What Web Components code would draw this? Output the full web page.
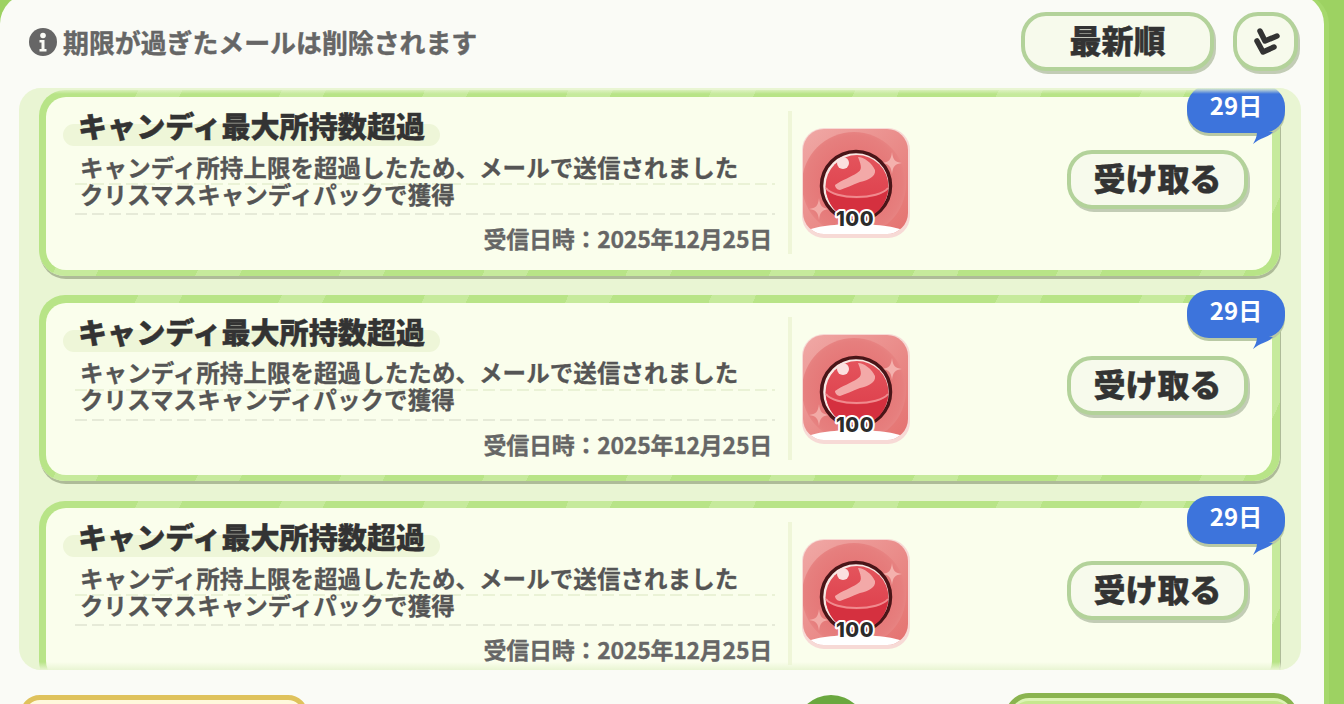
<!DOCTYPE html>
<html lang="ja">
<head>
<meta charset="utf-8">
<style>
html,body{margin:0;padding:0;height:704px;overflow:hidden;background:#9dd262;}
body{font-family:"Noto Sans CJK JP","Noto Sans",sans-serif;}
</style>
</head>
<body>
<x-app></x-app>

<template id="t-app">
<style>
:host{display:block;width:1344px;height:704px;overflow:hidden;background:#9dd262;}
.panel{width:1324px;height:720px;margin-top:-6px;box-sizing:border-box;background:#fafbf6;border-radius:30px 30px 0 0;padding:18px 23px 0 19px;display:flex;flex-direction:column;box-shadow:5px 0 0 #a5d86c;}
.foot{display:flex;align-items:flex-start;flex:none;margin-top:23px;padding-left:1px;}
.yellow{width:288px;height:70px;flex:none;margin-top:2px;box-sizing:border-box;border:5px solid #dfc25c;border-radius:20px;background:#fff9dc;}
.circle{width:72px;height:72px;flex:none;margin:2px 0 0 487px;border-radius:50%;background:#6aa83f;}
.green{width:293px;height:70px;flex:none;margin-left:138px;box-sizing:border-box;border:5px solid #8ab44f;border-radius:24px;background:#c6e88f;box-shadow:inset 0 3px 0 #dcf4b4;}
</style>
<div class="panel">
<x-top-bar></x-top-bar>
<x-mail-list>
<x-mail-card></x-mail-card>
<x-mail-card></x-mail-card>
<x-mail-card></x-mail-card>
</x-mail-list>
<div class="foot"><div class="yellow"></div><div class="circle"></div><div class="green"></div></div>
</div>
</template>

<template id="t-top">
<style>
:host{display:flex;align-items:flex-start;flex:none;height:76px;padding:0 3px 0 10px;}
svg.i{width:28px;height:28px;flex:none;margin:16px 6px 0 0;}
.note{font-size:25.900px;font-weight:700;color:#666;line-height:30px;white-space:nowrap;margin-top:15px;flex:1;-webkit-text-stroke:.4px #666;}
x-btn.sort{width:193px;height:59px;margin-right:19px;flex:none;}
x-btn.dir{width:65px;height:59px;flex:none;}
</style>
<svg class="i" viewBox="0 0 28 28"><circle cx="14" cy="14" r="14" fill="#666"/><circle cx="14" cy="7.5" r="2.8" fill="#fafbf6"/><path d="M10.5 12h5v9h2v2.5h-7V21h2v-6.500h-2z" fill="#fafbf6"/></svg>
<div class="note">期限が過ぎたメールは削除されます</div>
<x-btn class="sort">最新順</x-btn>
<x-btn class="dir"><svg width="40" height="36" viewBox="0 0 40 36" style="display:block;margin-top:5px"><path d="M14 7l5 10 12-5M11 17l6 11 11-5" fill="none" stroke="#333" stroke-width="5.500" stroke-linecap="round" stroke-linejoin="round"/></svg></x-btn>
</template>

<template id="t-btn">
<style>
:host{display:flex;align-items:center;justify-content:center;box-sizing:border-box;height:59px;padding-bottom:5px;border:4.500px solid #b3d29a;border-radius:25px;background:#f7faec;box-shadow:2px 3px 0 #c2ccb5;font-size:32px;font-weight:900;color:#333;line-height:1;white-space:nowrap;-webkit-text-stroke:.4px #333;}
</style>
<slot></slot>
</template>

<template id="t-list">
<style>
:host{display:block;position:relative;height:582px;flex:none;border-radius:22px;background:#e9f5d3;overflow:hidden;}
.scroll{display:flex;flex-direction:column;gap:19.500px;padding:1.500px 21px 0 20px;}
:host::before,:host::after{content:"";position:absolute;left:0;right:0;height:8px;z-index:3;pointer-events:none;}
:host::before{top:0;background:linear-gradient(#e9f5d3,rgba(233,245,211,0));height:6px;}
:host::after{bottom:0;background:linear-gradient(rgba(233,245,211,0),#e9f5d3);}
</style>
<div class="scroll"><slot></slot></div>
</template>

<template id="t-card">
<style>
:host{display:block;position:relative;flex:none;box-sizing:border-box;height:186px;padding:7.500px 8px 6px 7px;border-radius:26px;background:repeating-linear-gradient(115deg,#b8e487 0 90px,#c6ea9c 90px 130px);box-shadow:1px 3px 0 #aebb98;}
.inner{display:flex;height:172.500px;box-sizing:border-box;border-radius:20px;background:#fafeec;}
.left{width:742px;flex:none;box-sizing:border-box;padding-top:12px;padding-left:29px;padding-right:13px;}
.title{display:inline-block;position:relative;margin-left:3px;font-size:29.100px;font-weight:900;line-height:32px;color:#333;white-space:nowrap;z-index:0;-webkit-text-stroke:.4px #333;}
.title::before{content:"";position:absolute;left:-15px;right:-15px;top:15px;height:22px;border-radius:11px;background:#eef6d8;z-index:-1;}
.desc{margin-top:10.500px;padding-left:5px;height:62px;font-size:23.500px;letter-spacing:.07px;font-weight:700;line-height:27px;color:#555;white-space:nowrap;-webkit-text-stroke:.3px #555;
background:repeating-linear-gradient(90deg,#eaf2d6 0 12px,transparent 12px 17px) 0 29.500px/100% 2px no-repeat,repeating-linear-gradient(90deg,#e6ead8 0 12px,transparent 12px 17px) 0 59.500px/100% 2px no-repeat;}
.date{margin-top:7.500px;line-height:30px;font-size:23px;letter-spacing:-.25px;font-weight:700;color:#666;text-align:right;padding-right:3px;white-space:nowrap;-webkit-text-stroke:.3px #666;}
.div{width:4px;height:143px;margin-top:14px;background:#eff6d8;flex:none;}
x-candy{margin:31px 0 0 10px;flex:none;}
x-btn{width:181px;height:59px;margin:53px 24px 0 auto;flex:none;}
x-badge{position:absolute;top:-5px;right:-5px;z-index:2;}
</style>
<div class="inner">
<div class="left">
<div class="title">キャンディ最大所持数超過</div>
<div class="desc">キャンディ所持上限を超過したため、メールで送信されました<br>クリスマスキャンディパックで獲得</div>
<div class="date">受信日時：2025年12月25日</div>
</div>
<div class="div"></div>
<x-candy></x-candy>
<x-btn>受け取る</x-btn>
</div>
<x-badge>29日</x-badge>
</template>

<template id="t-badge">
<style>
:host{display:block;width:98px;height:48px;}
.b{position:relative;display:flex;align-items:center;justify-content:center;height:48px;padding-bottom:8px;box-sizing:border-box;border-radius:22px;background:#3d74dc;box-shadow:0 3px 0 #b9c9a4;color:#fff;font-size:24px;font-weight:700;line-height:1;z-index:1;}
svg{display:block;position:absolute;top:47px;left:64px;z-index:2;}
</style>
<div class="b"><slot></slot></div>
<svg width="24" height="13" viewBox="0 0 24 13"><path d="M6 0h16c-6 6-12 5-20 12C4 8 6 5 6 0z" fill="#3d74dc"/></svg>
</template>

<template id="t-candy">
<style>
:host{display:block;width:108px;height:110px;}
svg{display:block;}
text{font-family:"Inter","Liberation Sans",sans-serif;font-weight:800;font-size:20px;letter-spacing:.5px;}
</style>
<svg width="108" height="110" viewBox="0 0 108 110">
<defs>
<linearGradient id="g" x1="0" y1="0" x2="1" y2="1"><stop offset="0" stop-color="#f0a9a6"/><stop offset="1" stop-color="#e4716f"/></linearGradient>
<radialGradient id="h" cx=".5" cy=".5" r=".55"><stop offset="0" stop-color="#e4686a"/><stop offset=".85" stop-color="#e67f7e"/><stop offset="1" stop-color="#e98a88"/></radialGradient>
<linearGradient id="r" x1="0" y1="0" x2="0" y2="1"><stop offset="0" stop-color="#e4545c"/><stop offset="1" stop-color="#dc3a48"/></linearGradient>
<clipPath id="c"><rect x="1" y="1" width="105" height="105" rx="21"/></clipPath>
</defs>
<rect x="0" y="0" width="108" height="110" rx="22" fill="#f7dad6"/>
<rect x="1" y="1" width="105" height="105" rx="21" fill="url(#g)"/>
<g clip-path="url(#c)">
<circle cx="52" cy="56" r="52" fill="url(#h)"/>
<path d="M1 105c14-12 90-12 105 0v6H1z" fill="#fff"/>
</g>
<path d="M90 24c1 8 3 10 10 11-7 1-9 3-10 11-1-8-3-10-10-11 7-1 9-3 10-11z" fill="#f4b1ad"/>
<path d="M17 70c1 8 3 10 10 11-7 1-9 3-10 11-1-8-3-10-10-11 7-1 9-3 10-11z" fill="#f2aaa6"/>
<circle cx="54" cy="58" r="34.500" fill="#f8e8e4" stroke="#4a1518" stroke-width="3.500"/>
<circle cx="55" cy="58.500" r="31.500" fill="url(#r)"/>
<path d="M24 60c8 14 53 14 62 0-1 20-15 31-31 31S25 80 24 60z" fill="#d5303f"/>
<path d="M24 60c8 12 53 12 62 0" fill="none" stroke="#f08a8e" stroke-width="2"/>
<path d="M56 29c6 0 14 6 17 13 1 6-6 10-15 12-8 3-14 6-20 8-3 0-5-3-5-5 7-5 16-8 22-12 5-3 5-6 1-16z" fill="#f3a9a8"/>
<circle cx="41" cy="35" r="6" fill="#fbe0df"/>
<text x="53" y="98" text-anchor="middle" fill="#2b2b2b" stroke="#fff" stroke-width="4" paint-order="stroke" stroke-linejoin="round">100</text>
</svg>
</template>

<script>
function def(name, tpl){
  customElements.define(name, class extends HTMLElement{
    constructor(){super();this.attachShadow({mode:"open"}).appendChild(document.getElementById(tpl).content.cloneNode(true));}
  });
}
def("x-btn","t-btn");
def("x-badge","t-badge");
def("x-candy","t-candy");
def("x-mail-card","t-card");
def("x-mail-list","t-list");
def("x-top-bar","t-top");
def("x-app","t-app");
</script>
</body>
</html>
